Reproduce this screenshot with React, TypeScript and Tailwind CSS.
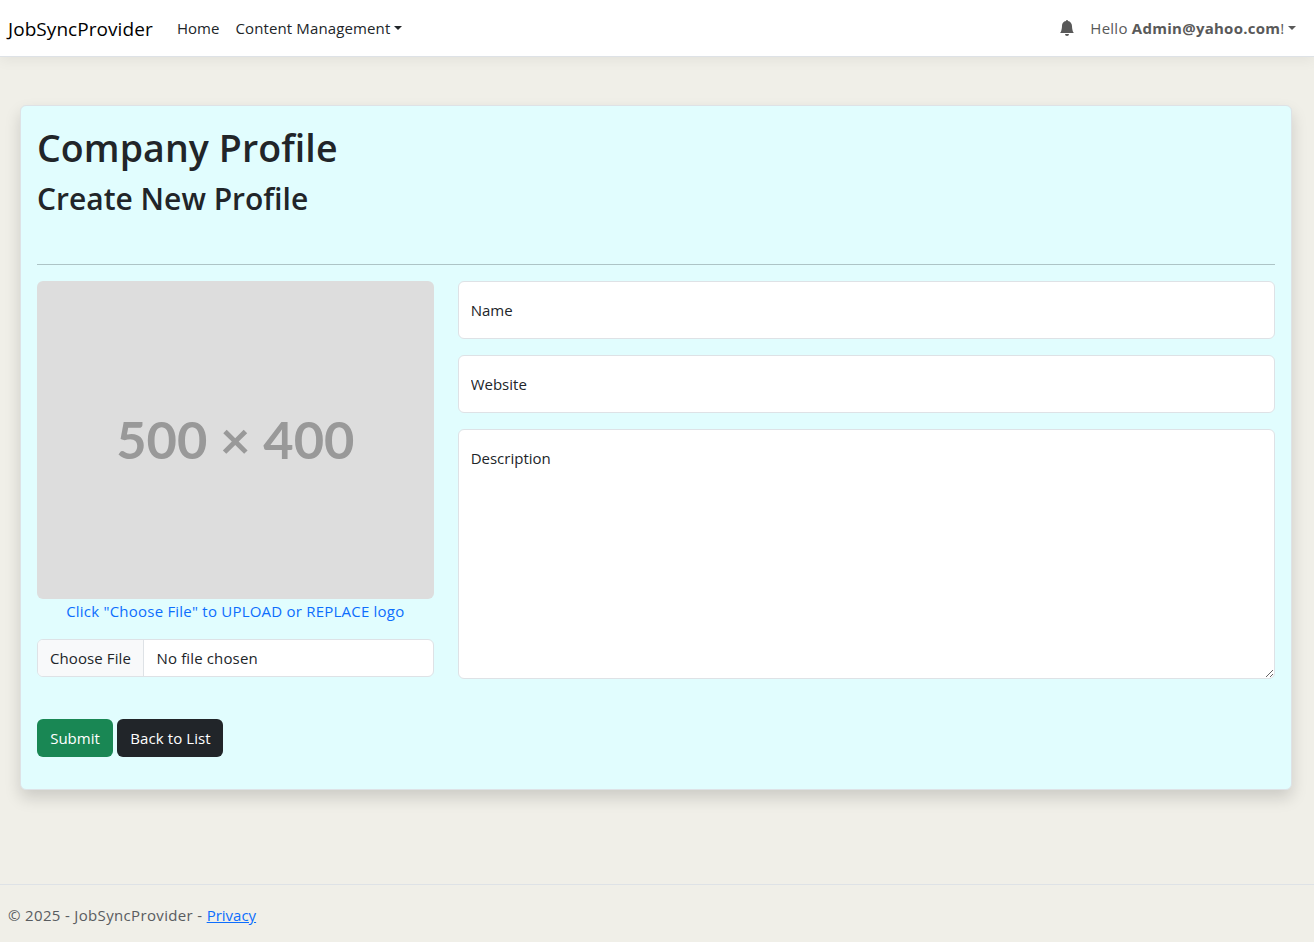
import { BsBellFill } from "react-icons/bs";

function Caret() {
  return (
    <span className="ml-[3.5px] inline-block h-0 w-0 border-x-[4.8px] border-t-[4.8px] border-x-transparent border-t-current" />
  );
}

function Navbar() {
  return (
    <header className="flex h-[57px] items-center border-b border-[#dee2e6] bg-white px-2 shadow-[0_4px_12px_rgba(0,0,0,0.05)]">
      <a href="#" className="w-[161px] pt-px text-[19px] leading-[30px] tracking-[0.06px] text-black">
        JobSyncProvider
      </a>
      <nav className="flex grow items-center">
        <a href="#" className="px-2">Home</a>
        <a href="#" className="flex items-center px-2 tracking-[0.13px]">
          Content Management
          <Caret />
        </a>
      </nav>
      <div className="flex items-center text-[#595959]">
        <BsBellFill className="mr-[15px] size-4" />
        <a href="#" className="flex items-center pr-2.5 tracking-[0.26px]">
          <span>
            Hello <strong className="font-bold">Admin@yahoo.com</strong>!
          </span>
          <Caret />
        </a>
      </div>
    </header>
  );
}

function LogoUpload() {
  return (
    <div className="w-[396.67px]">
      <div className="flex h-[318px] items-center justify-center rounded-md bg-[#dddddd] pb-0.5 font-['Lato',sans-serif] text-[52.4px] font-bold text-[#999999]">
        500 × 400
      </div>
      <p className="text-center tracking-[0.22px] text-[#0d6efd]">
        Click "Choose File" to UPLOAD or REPLACE logo
      </p>
      <label className="mt-4 flex h-[38px] items-stretch overflow-hidden rounded-md border border-[#dee2e6] bg-white">
        <span className="flex w-[106px] items-center justify-center border-r border-[#dee2e6] bg-[#f8f9fa] tracking-[0.1px]">
          Choose File
        </span>
        <span className="flex items-center pl-[12.5px] tracking-[0.14px]">No file chosen</span>
      </label>
    </div>
  );
}

function ProfileFields() {
  const field =
    "block w-full rounded-md border border-[#dee2e6] bg-white px-3 outline-none placeholder:text-[#212529]";
  return (
    <div className="grow space-y-4">
      <input className={`${field} h-[58px]`} placeholder="Name" />
      <input className={`${field} h-[58px]`} placeholder="Website" />
      <textarea className={`${field} h-[250px] resize pt-4`} placeholder="Description" />
    </div>
  );
}

export default function App() {
  return (
    <div className="flex h-[942px] flex-col bg-[#f0efe8] font-['Open_Sans','Noto_Sans',sans-serif] text-[15px] leading-6 text-[#212529]">
      <Navbar />
      <main className="grow pt-12 pr-[22px] pl-5">
        <section className="h-[685px] rounded-md border border-[#dee2e6] bg-[#e1fdfe] px-4 pt-[18px] shadow-[0_8px_16px_rgba(0,0,0,0.15)]">
          <h1 className="text-[37.5px] leading-[48px] font-semibold tracking-[0.08px]">Company Profile</h1>
          <h2 className="mt-2 text-[30px] leading-[38px] font-semibold">Create New Profile</h2>
          <hr className="mt-[46px] mb-4 border-[#adc4c6]" />
          <form className="flex gap-6">
            <LogoUpload />
            <ProfileFields />
          </form>
          <div className="mt-10 flex gap-1 text-white">
            <button className="h-[38px] w-[76px] rounded-md bg-[#198754]">Submit</button>
            <button className="h-[38px] w-[106px] rounded-md bg-[#212529] pl-px tracking-[0.1px]">Back to List</button>
          </div>
        </section>
      </main>
      <footer className="h-[58px] border-t border-[#dee2e6] px-2 pt-[18px] text-[#595c5f]">
        <span className="tracking-[0.34px]">© 2025 - JobSyncProvider - </span>
        <a href="#" className="text-[#0d6efd] underline">Privacy</a>
      </footer>
    </div>
  );
}
